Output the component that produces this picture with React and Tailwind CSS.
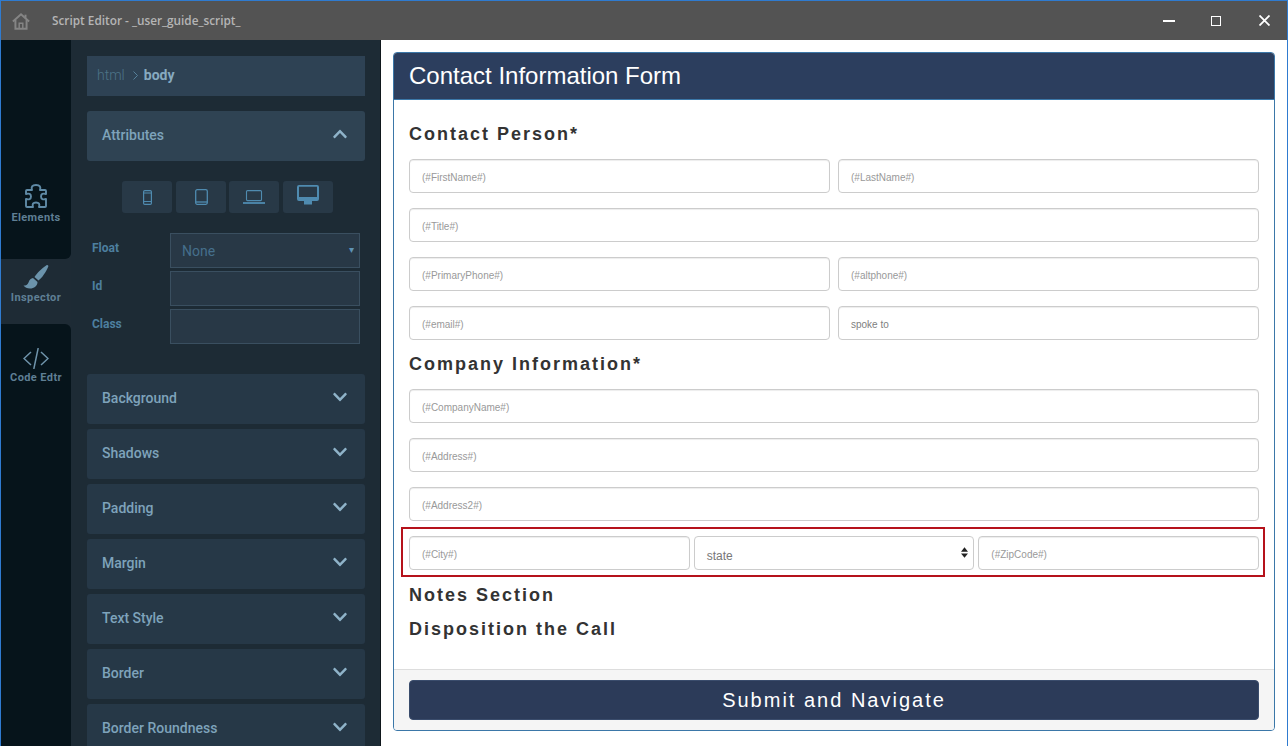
import React from "react";
import { FaChevronDown, FaChevronUp } from "react-icons/fa";

function Accordion({ label }) {
  return (
    <div className="h-[50px] mb-[5px] shrink-0 rounded-[3px] bg-[#263847] pl-[15px] pr-[17px] pb-[2px] flex items-center justify-between text-[14px] font-medium text-[#7ea3bb]">
      <span>{label}</span>
      <FaChevronDown className="w-[16px] h-[16px] text-[#8fb3c9] -mt-[3px]" />
    </div>
  );
}

function Field({ label, children }) {
  return (
    <div className="flex items-start h-[35px] mb-[3px]">
      <div className="w-[83px] pt-[6px] pl-[5px] text-[12px] font-bold text-[#4d7f9f]">{label}</div>
      <div className="w-[190px] h-[35px] border border-[#3a4f60] bg-[#283846] flex items-center justify-between pl-[11px] pr-[5px] pt-[2px] text-[14px] text-[#456f8c]">
        {children}
      </div>
    </div>
  );
}

function Input({ text, dark = false }) {
  return (
    <div className={"h-[34px] flex-1 min-w-0 rounded-[4px] border border-[#cccccc] bg-white flex items-center pl-[12px] pt-[2px] text-[10px] shadow-[inset_0_1px_1px_rgba(0,0,0,0.075)] " + (dark ? "text-[#808080]" : "text-[#999999]")}>
      {text}
    </div>
  );
}

function Heading({ children, className = "" }) {
  return <h3 className={"text-[18px] leading-[20px] font-bold tracking-[2px] text-[#333333] " + className}>{children}</h3>;
}

function RailItem({ icon, label, iconGap }) {
  return (
    <div className="flex flex-col items-center text-[11px] font-bold tracking-[0.4px] text-[#5f7f94]">
      <div className={iconGap}>{icon}</div>
      <span className="leading-[13px] whitespace-nowrap">{label}</span>
    </div>
  );
}

function DeviceButton({ children, className = "" }) {
  return <div className={"w-[50px] h-[32px] rounded-[3px] bg-[#283947] flex items-center justify-center " + className}>{children}</div>;
}

export default function App() {
  const accordions = ["Background", "Shadows", "Padding", "Margin", "Text Style", "Border", "Border Roundness"];
  return (
    <div className="w-[1288px] h-[746px] overflow-hidden flex flex-col bg-white border-x border-t border-[#2f7bd0] font-['Liberation_Sans',sans-serif]">
      <div className="h-[39px] shrink-0 bg-[#535353] flex items-center">
        <svg className="ml-[11px] w-[18px] h-[18px] text-[#858585]" viewBox="0 0 20 20" fill="none" stroke="currentColor" strokeWidth="2.2">
          <path d="M1 10.5 10 2.5l9 8" />
          <path d="M3.8 9v9.5h12.4V9" />
          <path d="M8 18v-5.5h4V18" strokeWidth="1.6" />
          <path d="M15 3v3.5" />
        </svg>
        <span className="ml-[22px] text-[11.8px] font-semibold text-[#b5b5b5] font-['Open_Sans',sans-serif]">Script Editor - _user_guide_script_</span>
        <div className="ml-auto flex items-center text-white">
          <div className="w-[12px] h-[2px] bg-white mr-[36px]" />
          <div className="w-[10px] h-[10px] border border-white mr-[38px]" />
          <svg className="w-[11px] h-[11px] mr-[17px]" viewBox="0 0 11 11" stroke="white" strokeWidth="1.8"><path d="M.5.5l10 10M10.5.5l-10 10" /></svg>
        </div>
      </div>
      <div className="flex-1 min-h-0 flex font-['Roboto',sans-serif]">
        <div className="w-[70px] shrink-0 bg-[#1e2b35] flex flex-col">
          <div className="h-[219px] shrink-0 bg-[#06141b] rounded-br-[6px] pt-[144px]">
            <RailItem
              iconGap="mb-[3px]"
              label="Elements"
              icon={
                <svg className="w-[24px] h-[24px] text-[#5f8aa6]" viewBox="0 0 24 24" fill="none" stroke="currentColor" strokeWidth="1.9" strokeLinejoin="round">
                  <path d="M3 6h5C7 3 8 1 12 1s5 2 4 5h5q1 0 1 1v3c-3-1-5 0-5 2.5s2 3.500 5 2.500v7q0 1-1 1h-6c1-3 0-4.500-3-4.500s-4 1.500-3 4.500H3q-1 0-1-1v-7c3 1 5 0 5-2.500S5 9 2 10V7q0-1 1-1z" />
                </svg>
              }
            />
          </div>
          <div className="h-[65px] shrink-0 pt-[5px]">
            <RailItem
              iconGap="mb-[2px]"
              label="Inspector"
              icon={
                <svg className="w-[28px] h-[25px] text-[#6b93ab]" viewBox="0 0 28 25" fill="currentColor">
                  <path d="M24.500 1.200C25.500.5 26.800 1.500 26.200 2.800 24 8 20 14 16.500 16.500L12.500 13C15 9 20 4 24.500 1.200z" />
                  <path d="M11 14l4.500 4c0 4-3.500 6.500-7.500 6.500-3 0-5-1-6.500-3 2.500 0 4-.5 5-3 1-3 2.500-4 4.500-4.500z" />
                </svg>
              }
            />
          </div>
          <div className="flex-1 bg-[#06141b] rounded-tr-[6px] pt-[24px]">
            <RailItem
              iconGap="mb-[2px]"
              label="Code Edtr"
              icon={
                <svg className="w-[26px] h-[21px] text-[#6f94ab]" viewBox="0 0 26 21" fill="none" stroke="currentColor" strokeWidth="1.500">
                  <path d="M8 4 1 10.500 8 17M18 4l7 6.500L18 17M15.200 0l-4.400 21" />
                </svg>
              }
            />
          </div>
        </div>
        <div className="w-[310px] shrink-0 bg-[#1d2b35] border-r border-[#0f171c] pl-[16px] pr-[16px] pt-[16px] flex flex-col overflow-hidden">
          <div className="h-[40px] w-[278px] shrink-0 bg-[#2e4254] flex items-center pl-[10px] pb-[2px] text-[14px]">
            <span className="text-[#4d7488] font-light">html</span>
            <svg className="ml-[8px] mr-[6px] w-[5px] h-[9px] text-[#56809a]" viewBox="0 0 5 9" fill="none" stroke="currentColor"><path d="M.5.5l4 4-4 4" /></svg>
            <span className="font-bold text-[#87aac0]">body</span>
          </div>
          <div className="h-[50px] w-[278px] mt-[15px] shrink-0 rounded-[3px] bg-[#2f4353] pl-[15px] pr-[17px] pb-[2px] flex items-center justify-between text-[14px] font-medium text-[#7ea3bb]">
            <span>Attributes</span>
            <FaChevronUp className="w-[16px] h-[16px] text-[#8fb3c9] -mt-[3px]" />
          </div>
          <div className="flex mt-[20px] ml-[35px] h-[32px] shrink-0 text-[#4f8bb0]">
            <DeviceButton>
              <svg className="w-[9px] h-[15px]" viewBox="0 0 9 15" fill="none" stroke="currentColor" strokeWidth="1.200">
                <rect x=".6" y=".6" width="7.800" height="13.800" rx="1.200" />
                <path d="M.6 3h7.800M.6 11.500h7.800" />
              </svg>
            </DeviceButton>
            <DeviceButton className="ml-[4px]">
              <svg className="w-[13px] h-[16px]" viewBox="0 0 13 16" fill="none" stroke="currentColor" strokeWidth="1.300">
                <rect x=".7" y=".7" width="11.600" height="14.600" rx="1.500" />
                <path d="M.7 13h11.600" />
              </svg>
            </DeviceButton>
            <DeviceButton className="ml-[3px]">
              <svg className="w-[22px] h-[14px]" viewBox="0 0 22 14" fill="none" stroke="currentColor" strokeWidth="1.100">
                <rect x="3.500" y=".6" width="15" height="10" rx="1" />
                <path d="M0 13h22" strokeWidth="1.800" />
              </svg>
            </DeviceButton>
            <DeviceButton className="ml-[4px]">
              <svg className="w-[22px] h-[20px] -mt-[5px]" viewBox="0 0 22 20" fill="currentColor">
                <path fillRule="evenodd" d="M2 0h18q2 0 2 2v12q0 2-2 2H2q-2 0-2-2V2q0-2 2-2zm0 1.800V12h18V1.800z" />
                <rect x="7" y="16" width="8" height="3.500" />
              </svg>
            </DeviceButton>
          </div>
          <div className="mt-[20px] w-[278px] shrink-0">
            <Field label="Float">
              <span>None</span>
              <span className="text-[10px] text-[#5f93b5] -mt-[5px]">▾</span>
            </Field>
            <Field label="Id" />
            <Field label="Class" />
          </div>
          <div className="mt-[27px] w-[278px] shrink-0 flex flex-col">
            {accordions.map((a) => <Accordion key={a} label={a} />)}
          </div>
        </div>
        <div className="flex-1 min-w-0 bg-white pl-[12px] pr-[12px] pt-[12px] font-['Liberation_Sans',sans-serif]">
          <div className="h-[679px] rounded-[4px] border border-[#3b77a8] flex flex-col overflow-hidden">
            <div className="h-[47px] shrink-0 bg-[#2c3e5e] border-b border-[#3b77a8] flex items-center pl-[15px] text-[24px] text-white">Contact Information Form</div>
            <div className="flex-1 min-h-0 pl-[15px] pr-[15px] pt-[24px]">
              <Heading>Contact Person*</Heading>
              <div className="flex gap-[8px] mt-[15px]"><Input text="(#FirstName#)" /><Input text="(#LastName#)" /></div>
              <div className="flex mt-[15px]"><Input text="(#Title#)" /></div>
              <div className="flex gap-[8px] mt-[15px]"><Input text="(#PrimaryPhone#)" /><Input text="(#altphone#)" /></div>
              <div className="flex gap-[8px] mt-[15px]"><Input text="(#email#)" /><Input text="spoke to" dark /></div>
              <Heading className="mt-[14px]">Company Information*</Heading>
              <div className="flex mt-[15px]"><Input text="(#CompanyName#)" /></div>
              <div className="flex mt-[15px]"><Input text="(#Address#)" /></div>
              <div className="flex mt-[15px]"><Input text="(#Address2#)" /></div>
              <div className="-ml-[8px] -mr-[6px] mt-[6px] h-[50px] border-2 border-[#b5121b] grid grid-cols-3 items-center gap-[4px] pl-[6px] pr-[4px] pt-[2px]">
                <Input text="(#City#)" />
                <div className="h-[34px] min-w-0 rounded-[4px] border border-[#cccccc] bg-white flex items-center justify-between pl-[12px] pr-[5px] text-[12px] text-[#777777]">
                  <span className="pt-[5px]">state</span>
                  <svg width="7" height="11" viewBox="0 0 8 12" fill="#222222" className="-mt-[2px]"><path d="M4 0l4 5H0zM4 12l4-5H0z" /></svg>
                </div>
                <Input text="(#ZipCode#)" />
              </div>
              <Heading className="mt-[8px]">Notes Section</Heading>
              <Heading className="mt-[14px]">Disposition the Call</Heading>
            </div>
            <div className="h-[61px] shrink-0 bg-[#f5f5f5] border-t border-[#dddddd] pl-[15px] pr-[15px] pt-[10px]">
              <div className="h-[40px] rounded-[4px] bg-[#2c3b59] border border-[#3a4c6c] flex items-center justify-center text-[20px] tracking-[2px] text-white">Submit and Navigate</div>
            </div>
          </div>
        </div>
      </div>
    </div>
  );
}
